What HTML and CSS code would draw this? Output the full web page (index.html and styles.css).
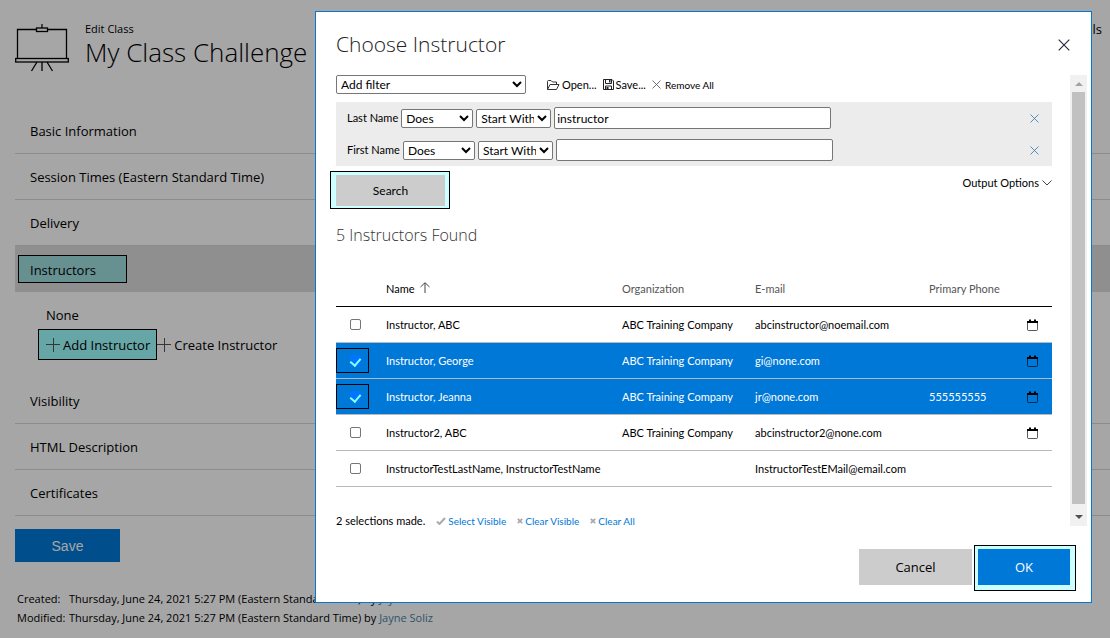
FILE: index.html
```html
<!DOCTYPE html>
<html lang="en">
<head>
<meta charset="utf-8">
<title>Edit Class - My Class Challenge</title>
<link rel="stylesheet" href="styles.css">
</head>
<body>
<svg class="sprite" aria-hidden="true">
  <symbol id="i-cross" viewBox="0 0 12 12"><path d="M.7 .7L11.300 11.300M11.300 .7L.7 11.300" fill="none" stroke="currentColor" stroke-width="1.1"/></symbol>
  <symbol id="i-plus" viewBox="0 0 14 14"><path d="M0 6.5H14M7.5 0V14" fill="none" stroke="currentColor"/></symbol>
  <symbol id="i-cal" viewBox="0 0 11 12"><path d="M.5 3V10.500Q.5 11.500 1.500 11.500H9.500Q10.500 11.500 10.500 10.500V3" fill="none" stroke="#000" stroke-opacity=".65"/><path d="M0 2H11V4H0Z" fill="#000"/><path d="M3 .5V3M8 .5V3" stroke="#000" stroke-width="2"/></symbol>
  <symbol id="i-tick" viewBox="0 0 10 8"><path d="M1 4.5L3.5 7L9 1" fill="none" stroke="currentColor" stroke-width="2"/></symbol>
  <symbol id="i-x" viewBox="0 0 6 6"><path d="M.8 .8L5.2 5.2M5.2 .8L.8 5.2" fill="none" stroke="currentColor" stroke-width="1.8"/></symbol>
</svg>

<main class="page">
  <header class="page-head">
    <svg class="board" viewBox="0 0 56 48" fill="none" stroke="#000" stroke-width="1.3">
      <path d="M27 0V4" stroke-width="1.2"/>
      <path d="M22 5.500H2.500V34.500M32 5.500H51.500V34.500"/>
      <rect x="21.500" y="4" width="11" height="3.500"/>
      <rect x=".7" y="34.500" width="52.600" height="3.500"/>
      <path d="M27 38V47M22 38L16.500 47M32 38L37.500 47"/>
    </svg>
    <div class="titles">
      <div class="eyebrow">Edit Class</div>
      <h1>My Class Challenge</h1>
    </div>
    <a class="details" href="#">Details</a>
  </header>

  <section class="sections">
    <a class="section" href="#">Basic Information</a>
    <a class="section" href="#">Session Times (Eastern Standard Time)</a>
    <a class="section" href="#">Delivery</a>
    <a class="section open" href="#"><span class="mark">Instructors</span></a>
    <div class="section-body">
      <p>None</p>
      <div class="links">
        <button class="link marked" type="button"><svg><use href="#i-plus"/></svg>Add Instructor</button>
        <button class="link" type="button"><svg><use href="#i-plus"/></svg>Create Instructor</button>
      </div>
    </div>
    <a class="section" href="#">Visibility</a>
    <a class="section" href="#">HTML Description</a>
    <a class="section" href="#">Certificates</a>
  </section>

  <button class="save" type="button">Save</button>

  <dl class="audit">
    <dt>Created:</dt><dd>Thursday, June 24, 2021 5:27 PM (Eastern Standard Time) by <a href="#">Jayne Soliz</a></dd>
    <dt>Modified:</dt><dd>Thursday, June 24, 2021 5:27 PM (Eastern Standard Time) by <a href="#">Jayne Soliz</a></dd>
  </dl>
</main>

<div class="overlay"></div>

<div class="dialog" role="dialog" aria-labelledby="dlg-title">
  <header class="dialog-head">
    <h2 id="dlg-title">Choose Instructor</h2>
    <button class="close" type="button" aria-label="Close"><svg><use href="#i-cross"/></svg></button>
  </header>

  <div class="dialog-body">
    <div class="content">
      <div class="toolbar">
        <select class="add-filter" aria-label="Add filter"><option>Add filter</option></select>
        <button class="tool" type="button"><svg viewBox="0 0 13 10" class="ic-open" fill="none" stroke="#333"><path d="M.5 9.500V1.500Q.5 .5 1.500 .5H4L5.500 2H9.500V4M.5 9.500L3 4.500H12L9.500 9.500Z"/></svg>Open...</button>
        <button class="tool" type="button"><svg viewBox="0 0 11 11" class="ic-save" fill="none" stroke="#222"><path d="M.5 .5H9L10.500 2V10.500H.5Z"/><path d="M2.500 .5V4.500H8.500V.5M2.500 10.500V7H8.500V10.500"/><path d="M6 1H7.500V3.500H6ZM3.500 8H5.500V10H3.500Z" fill="#222" stroke="none"/></svg>Save...</button>
        <button class="tool small" type="button"><svg class="ic-x"><use href="#i-cross"/></svg>Remove All</button>
      </div>

      <div class="filters">
        <div class="filter">
          <label for="ln">Last Name</label>
          <select class="does" aria-label="Last name does"><option>Does</option></select>
          <select class="op" aria-label="Last name operator"><option>Start With</option></select>
          <input id="ln" type="text" value="instructor">
          <button class="remove" type="button" aria-label="Remove last name filter"><svg><use href="#i-cross"/></svg></button>
        </div>
        <div class="filter">
          <label for="fn">First Name</label>
          <select class="does" aria-label="First name does"><option>Does</option></select>
          <select class="op" aria-label="First name operator"><option>Start With</option></select>
          <input id="fn" type="text">
          <button class="remove" type="button" aria-label="Remove first name filter"><svg><use href="#i-cross"/></svg></button>
        </div>
      </div>

      <div class="search-row">
        <div class="halo"><button class="search" type="button">Search</button></div>
        <button class="output" type="button">Output Options<svg viewBox="0 0 10 6" fill="none" stroke="#444"><path d="M.5 .5L5 5L9.500 .5"/></svg></button>
      </div>

      <h3>5 Instructors Found</h3>

      <table>
        <colgroup><col class="c-check"><col><col class="c-org"><col class="c-mail"><col class="c-phone"><col class="c-cal"></colgroup>
        <thead>
          <tr><th></th><th class="sorted">Name <svg viewBox="0 0 10 11" fill="none" stroke="#444"><path d="M5 11V1M.5 5L5 .7L9.500 5"/></svg></th><th>Organization</th><th>E-mail</th><th>Primary Phone</th><th></th></tr>
        </thead>
        <tbody>
          <tr><td><label class="pick"><input type="checkbox" aria-label="Instructor, ABC"></label></td><td>Instructor, ABC</td><td>ABC Training Company</td><td>abcinstructor@noemail.com</td><td></td><td><svg class="cal"><use href="#i-cal"/></svg></td></tr>
          <tr class="on"><td><label class="pick"><input type="checkbox" checked aria-label="Instructor, George"></label></td><td>Instructor, George</td><td>ABC Training Company</td><td>gi@none.com</td><td></td><td><svg class="cal"><use href="#i-cal"/></svg></td></tr>
          <tr class="on"><td><label class="pick"><input type="checkbox" checked aria-label="Instructor, Jeanna"></label></td><td>Instructor, Jeanna</td><td>ABC Training Company</td><td>jr@none.com</td><td>555555555</td><td><svg class="cal"><use href="#i-cal"/></svg></td></tr>
          <tr><td><label class="pick"><input type="checkbox" aria-label="Instructor2, ABC"></label></td><td>Instructor2, ABC</td><td>ABC Training Company</td><td>abcinstructor2@none.com</td><td></td><td><svg class="cal"><use href="#i-cal"/></svg></td></tr>
          <tr><td><label class="pick"><input type="checkbox" aria-label="InstructorTestLastName, InstructorTestName"></label></td><td>InstructorTestLastName, InstructorTestName</td><td></td><td>InstructorTestEMail@email.com</td><td></td><td></td></tr>
        </tbody>
      </table>

      <div class="selection">
        <span>2 selections made.</span>
        <a href="#"><svg class="ic-tick"><use href="#i-tick"/></svg>Select Visible</a>
        <a href="#"><svg class="ic-clear"><use href="#i-x"/></svg>Clear Visible</a>
        <a href="#"><svg class="ic-clear"><use href="#i-x"/></svg>Clear All</a>
      </div>
    </div>
    <div class="scrollbar" aria-hidden="true"><i class="up"></i><i class="thumb"></i><i class="down"></i></div>
  </div>

  <footer class="dialog-foot">
    <button class="cancel" type="button">Cancel</button>
    <div class="halo ok-halo"><button class="ok" type="button">OK</button></div>
  </footer>
</div>
</body>
</html>
```
FILE: styles.css
```css
* { box-sizing: border-box; }
body {
  margin: 0;
  background: #fff;
  color: #000;
  font: 13px/18px "Open Sans", "Noto Sans", sans-serif;
  overflow: hidden;
}
h1, h2, h3, p, dl, dd { margin: 0; }
h1, h2, h3 { font-weight: 300; }
a { color: inherit; text-decoration: none; }
button { font: inherit; color: inherit; border: 0; padding: 0; background: none; }
svg { display: block; flex: none; }
.sprite { position: absolute; width: 0; height: 0; }

/* Class editor */
.page { padding-left: 15px; }
.page-head { display: flex; height: 108px; padding-top: 21px; padding-right: 8px; }
.board { width: 56px; height: 48px; margin-top: 3px; }
.titles { padding-left: 14px; flex: 1; }
.eyebrow { font-size: 11px; line-height: 16px; }
h1 { font-size: 26px; line-height: 30px; }
.details { line-height: 16px; }

.section { display: flex; align-items: center; height: 46px; padding: 1px 15px 0; border-bottom: 1px solid #d8d8d8; }
.section.open { background: #dcdcdc; padding: 0 3px; border-color: #dcdcdc; }
.mark { width: 109px; height: 28px; padding: 5px 11px; line-height: 18px; background: #9edddd; border: 1px solid #000; }
.section-body { height: 86px; padding: 14px 0 0 31px; }
.links { display: flex; margin: 5px 0 0 -8px; }
.link { display: flex; align-items: center; height: 31px; padding-top: 1px; }
.link svg { width: 14px; height: 14px; margin-right: 3px; color: #555; }
.marked { background: #9effff; border: 1px solid #000; padding: 1px 6px 0 7px; }

.save { display: block; width: 105px; height: 33px; margin-top: 13px; background: #0078d7; color: #fff; font: 14px "Liberation Sans", sans-serif; }
.audit { display: grid; grid-template-columns: 52px 1fr; padding: 27px 0 0 2px; font-size: 11px; line-height: 19px; }
.audit a { color: #4a7fa5; }

.overlay { position: fixed; inset: 0; background: rgba(0, 0, 0, .35); }

/* Instructor picker */
.dialog { position: fixed; top: 11px; right: 18px; width: 70%; background: #fff; border: 1px solid #0078d7; font-family: Lato, "Open Sans", sans-serif; font-size: 11px; }
.dialog-head { display: flex; justify-content: space-between; align-items: center; height: 63px; padding: 2px 21px 0 20px; }
h2, h3 { font-family: "Open Sans", "Noto Sans", sans-serif; }
h2 { font-size: 21px; line-height: 30px; margin-bottom: 2px; color: #222; }
.close svg { width: 12px; height: 12px; color: #223; }
.dialog-body { display: flex; gap: 18px; padding: 0 4px 0 20px; }
.content { flex: 1; min-width: 0; }

select, input[type="text"] { font: 12px/16px Lato, "Open Sans", sans-serif; color: #000; background-color: #fff; border: 1px solid #767676; border-radius: 2px; margin: 0; }
select { height: 19px; padding: 0; }
.toolbar { display: flex; align-items: center; height: 19px; margin-bottom: 8px; }
.add-filter { width: 190px; margin-right: 21px; }
.tool { display: flex; align-items: center; gap: 2px; margin-right: 6px; }
.tool.small { font-size: 10px; gap: 4px; }
.ic-open { width: 13px; height: 10px; }
.ic-save { width: 11px; height: 11px; }
.ic-x { width: 9px; height: 9px; color: #555; }

.filters { background: #ececec; padding-left: 11px; }
.filter { display: flex; align-items: center; height: 32px; gap: 3px; }
.filter label { min-width: 50px; }
.does { width: 72px; }
.op { width: 75px; }
.filter input { width: 277px; height: 22px; padding: 1px 2px; }
.remove { margin-left: auto; padding: 4px 13px 4px 4px; color: #2f78b4; }
.remove svg { width: 9px; height: 9px; }

.search-row { display: flex; justify-content: space-between; align-items: flex-start; padding-top: 5px; }
.halo { background: #cff; border: 1px solid #000; padding: 3px 4px 2px 5px; }
.search-row .halo { margin-left: -6px; }
.search { display: block; width: 109px; height: 31px; background: #ccc; font-size: 12px; }
.output { display: flex; align-items: center; gap: 3px; margin-top: 3px; }
.output svg { width: 10px; height: 6px; }
h3 { font-size: 16px; line-height: 24px; margin-top: 14px; color: #333; }

table { width: 100%; margin-top: 25px; border-collapse: collapse; table-layout: fixed; }
.c-check { width: 50px; }
.c-org { width: 133px; }
.c-mail { width: 174px; }
.c-phone { width: 98px; }
.c-cal { width: 25px; }
th { height: 34px; padding: 0; text-align: left; font-weight: 400; color: #555; border-bottom: 1px solid #000; }
th.sorted { color: #000; }
th svg { display: inline-block; width: 10px; height: 11px; margin-left: 3px; }
td { height: 36px; padding: 1px 0 0; white-space: nowrap; border-bottom: 1px solid #b9b9b9; }
td:first-child { padding: 0; }
.on td { background: #0078d7; color: #fff; }
.pick { display: flex; align-items: center; width: 33px; height: 25px; padding-left: 13px; border: 1px solid transparent; }
.on .pick { border-color: #000; }
.pick input { appearance: none; display: grid; place-items: center; width: 11px; height: 11px; margin: 0; border: 1px solid #767676; border-radius: 2px; background: #fff; }
.pick input:checked { background: #0075ff; border-color: #0075ff; }
.pick input:checked::after { content: ""; width: 5px; height: 8px; border: solid #8ff; border-width: 0 2px 2px 0; rotate: 40deg; margin-bottom: 2px; }
.cal { width: 11px; height: 12px; }

.selection { display: flex; align-items: center; height: 39px; padding-top: 30px; }
.selection a { display: flex; align-items: center; gap: 2px; margin-left: 11px; font-size: 10px; color: #0078d7; }
.selection svg { color: #aaa; }
.ic-tick { width: 10px; height: 8px; }
.ic-clear { width: 6px; height: 6px; }

.scrollbar { display: flex; flex-direction: column; align-items: center; width: 17px; background: #f1f1f1; }
.up { margin: 7px 0 6px; border: solid transparent; border-width: 0 4px 4px; border-bottom-color: #a3a3a3; }
.thumb { flex: 1; width: 13px; background: #c1c1c1; }
.down { margin: 11px 0 7px; border: solid transparent; border-width: 4px 4px 0; border-top-color: #505050; }

.dialog-foot { display: flex; justify-content: flex-end; align-items: flex-start; gap: 2px; padding: 19px 15px 11px; font: 13px/18px "Open Sans", "Noto Sans", sans-serif; }
.cancel { width: 113px; height: 36px; margin-top: 4px; background: #ccc; }
.ok-halo { padding: 3px 5px 5px 3px; }
.ok { display: block; width: 92px; height: 36px; background: #0078d7; color: #fff; }
```
